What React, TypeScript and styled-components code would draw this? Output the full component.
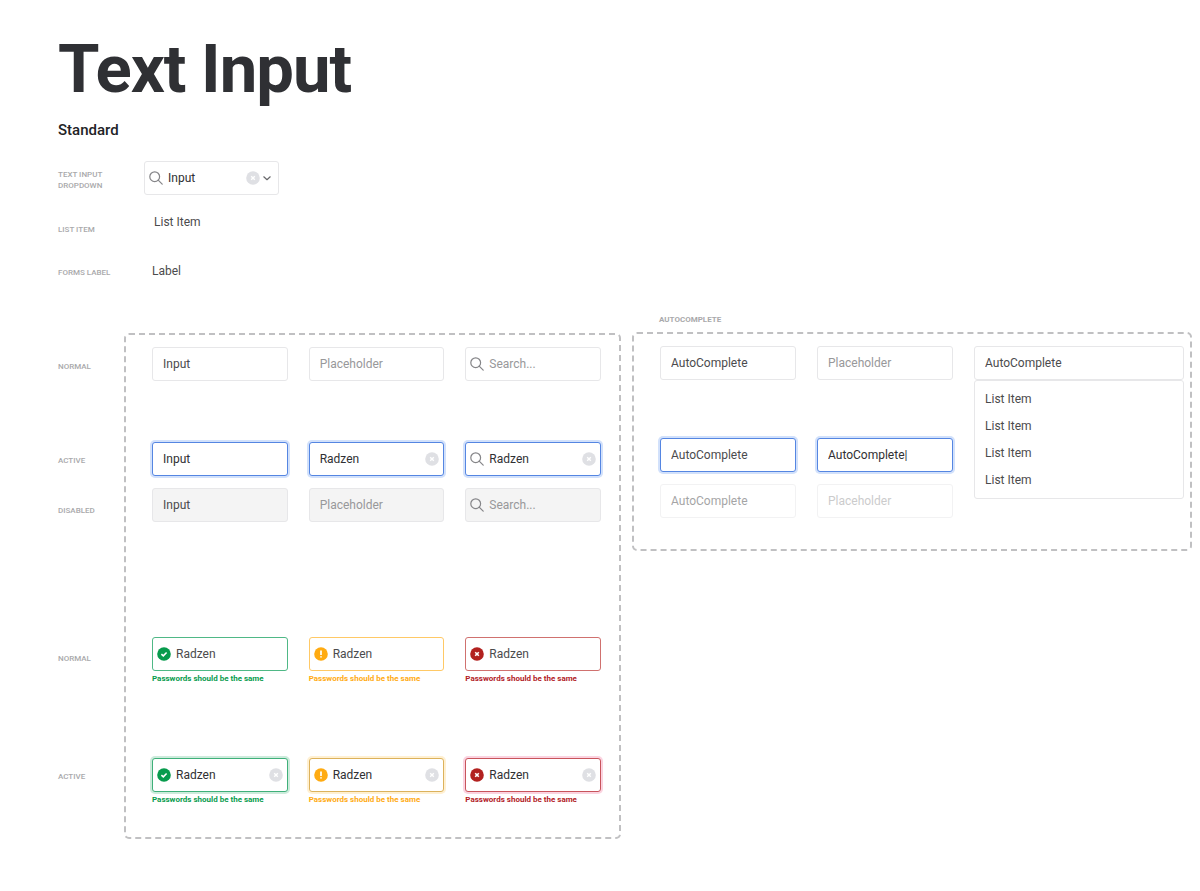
import React from "react";
import styled, { createGlobalStyle, css } from "styled-components";

const GlobalStyle = createGlobalStyle`
  *, *::before, *::after { box-sizing: border-box; }
  body {
    margin: 0;
    background: #fff;
    color: #4b4b4d;
    font-family: Roboto, "Liberation Sans", sans-serif;
    font-size: 12px;
  }
`;

type Tone = "success" | "warning" | "danger";

const tones: Record<Tone, { solid: string; line: string; activeLine: string; ring: string }> = {
  success: { solid: "#079b4d", line: "#4fb886", activeLine: "#3fb07a", ring: "#cdebdc" },
  warning: { solid: "#ffab12", line: "#ffc966", activeLine: "#dcb25c", ring: "#fff0d2" },
  danger: { solid: "#b2211f", line: "#d0716f", activeLine: "#c8545c", ring: "#fbd3e0" },
};

const Page = styled.main`
  padding: 29px 8px 32px 58px;
`;

const Title = styled.h1`
  margin: 0;
  color: #2f3034;
  font-size: 67px;
  font-weight: 700;
  line-height: 80px;
  letter-spacing: -1px;
`;

const Subtitle = styled.h2`
  margin: 11px 0 21px;
  color: #222326;
  font-size: 15px;
  font-weight: 500;
  line-height: 20px;
`;

const tagText = css`
  color: #a9a9ab;
  font-size: 8px;
  font-weight: 500;
  line-height: 11px;
  text-transform: uppercase;
`;

const Tag = styled.span`
  ${tagText}
`;

const TagLabel = styled.label`
  ${tagText}
`;

const SpecRow = styled.div<{ $align?: string; $space?: number }>`
  display: grid;
  grid-template-columns: 86px 135px;
  align-items: ${(p) => p.$align ?? "center"};
  margin-bottom: ${(p) => p.$space ?? 0}px;

  & > :first-child {
    width: 60px;
    padding-top: 3px;
  }
`;

const SampleItem = styled.span`
  padding: 1px 0 0 10px;
  line-height: 26px;
`;

const SampleLabel = styled.label`
  padding: 1px 0 0 8px;
  line-height: 26px;
`;

const Board = styled.div`
  display: grid;
  grid-template-columns: 66px minmax(0, 497fr) minmax(0, 571fr);
  align-items: start;
`;

const StateTags = styled.div`
  display: grid;
  grid-template-rows: 94px 50px 148px 118px auto;
  padding-top: 47px;
`;

const Panel = styled.section`
  padding: 12px 18px 32px 26px;
  border: 2px dashed #c0c0c2;
  border-radius: 5px;
`;

const InputPanel = styled(Panel)`
  margin: 19px 0 0;
`;

const AutoColumn = styled.div`
  margin-left: 11px;

  & > ${Tag} {
    display: block;
    padding-left: 27px;
    margin-bottom: 7px;
    font-weight: 700;
  }
`;

const AutoPanel = styled(Panel)`
  display: grid;
  grid-template-columns: 293fr 210fr;
  column-gap: 21px;
  padding-right: 6px;
  padding-bottom: 31px;
`;

const Row = styled.div<{ $cols?: number; $space?: number }>`
  display: grid;
  grid-template-columns: repeat(${(p) => p.$cols ?? 3}, minmax(0, 1fr));
  column-gap: 21px;
  margin-bottom: ${(p) => p.$space ?? 0}px;
`;

interface BoxProps {
  $active?: boolean;
  $disabled?: boolean;
  $faded?: boolean;
  $icon?: boolean;
  $tone?: Tone;
}

const Box = styled.div<BoxProps>`
  display: flex;
  align-items: center;
  height: 34px;
  padding: 0 4px 0 ${(p) => (p.$icon ? 4 : 10)}px;
  border: 1px solid
    ${(p) =>
      p.$tone
        ? p.$active
          ? tones[p.$tone].activeLine
          : tones[p.$tone].line
        : p.$active
          ? "#5586e2"
          : "#e7e7e9"};
  border-radius: 3px;
  background: ${(p) => (p.$disabled ? "#f4f4f4" : "#fff")};
  box-shadow: ${(p) => (p.$active ? `0 0 0 2px ${p.$tone ? tones[p.$tone].ring : "#d2e1fb"}` : "none")};
  opacity: ${(p) => (p.$faded ? 0.5 : 1)};
`;

const TextBox = styled.input<{ $strong?: boolean }>`
  flex: 1;
  min-width: 0;
  width: 100%;
  height: 30px;
  padding: 0;
  border: 0;
  outline: 0;
  background: transparent;
  color: ${(p) => (p.$strong ? "#303033" : "#4b4b4d")};
  font: inherit;

  &::placeholder {
    color: #98989a;
    opacity: 1;
  }
`;

const IconSlot = styled.span`
  display: flex;
  flex: none;
  width: 14px;
  margin-right: 5px;
`;

const IconButton = styled.button`
  display: flex;
  flex: none;
  padding: 0;
  border: 0;
  background: none;
`;

const Message = styled.p<{ $tone: Tone }>`
  margin: 2px 0 0;
  color: ${(p) => tones[p.$tone].solid};
  font-size: 8px;
  font-weight: 700;
  line-height: 11px;
  white-space: nowrap;
`;

const Options = styled.ul`
  margin: 0;
  padding: 5px 10px 4px;
  border: 1px solid #e7e7e9;
  border-radius: 3px;
  list-style: none;
  line-height: 27px;
`;

const SearchIcon = () => (
  <svg width="14" height="14" viewBox="0 0 14 14" fill="none" stroke="#858588" strokeWidth="1.2" strokeLinecap="round">
    <circle cx="5.7" cy="5.7" r="4.9" />
    <path d="M9.2 9.2 13.2 13.2" />
  </svg>
);

const ClearIcon = () => (
  <svg width="14" height="14" viewBox="0 0 14 14" fill="none">
    <circle cx="7" cy="7" r="6.8" fill="#dfe0e4" />
    <path d="M5.2 5.2 8.8 8.8M8.8 5.2 5.2 8.8" stroke="#fff" strokeWidth="1.4" />
  </svg>
);

const ChevronIcon = () => (
  <svg width="14" height="14" viewBox="0 0 14 14" fill="none" stroke="#68686b" strokeWidth="1.2" strokeLinecap="round" strokeLinejoin="round">
    <path d="M3.8 5.8 7 8.7 10.2 5.8" />
  </svg>
);

const ToneIcon = ({ tone }: { tone: Tone }) => (
  <svg width="14" height="14" viewBox="0 0 14 14" fill="none" stroke="#fff">
    <circle cx="7" cy="7" r="6.8" fill={tones[tone].solid} stroke="none" />
    {tone === "success" && <path d="M4.4 7.1 6.3 8.8 9.6 5.5" strokeWidth="1.6" />}
    {tone === "warning" && <path d="M7 3.6V8M7 9.2V10.6" strokeWidth="1.7" />}
    {tone === "danger" && <path d="M5.2 5.2 8.8 8.8M8.8 5.2 5.2 8.8" strokeWidth="1.6" />}
  </svg>
);

interface FieldProps {
  name: string;
  id?: string;
  value?: string;
  placeholder?: string;
  search?: boolean;
  clearable?: boolean;
  dropdown?: boolean;
  active?: boolean;
  strong?: boolean;
  disabled?: boolean;
  faded?: boolean;
  tone?: Tone;
}

const Field = ({ name, id, value, placeholder, search, clearable, dropdown, active, strong, disabled, faded, tone }: FieldProps) => (
  <Box $active={active} $disabled={disabled && !faded} $faded={faded} $icon={search || !!tone} $tone={tone}>
    {search && <IconSlot><SearchIcon /></IconSlot>}
    {tone && <IconSlot><ToneIcon tone={tone} /></IconSlot>}
    <TextBox
      id={id}
      type="text"
      aria-label={id ? undefined : name}
      defaultValue={value}
      placeholder={placeholder}
      disabled={disabled}
      $strong={strong}
    />
    {clearable && <IconButton type="button" aria-label={`Clear ${name}`}><ClearIcon /></IconButton>}
    {dropdown && <IconButton type="button" aria-label="Open list"><ChevronIcon /></IconButton>}
  </Box>
);

const toneOrder: Tone[] = ["success", "warning", "danger"];

const ValidationRow = ({ active, space }: { active?: boolean; space?: number }) => (
  <Row $space={space}>
    {toneOrder.map((tone) => (
      <div key={tone}>
        <Field name={`Password ${tone}`} value="Radzen" tone={tone} active={active} strong={active} clearable={active} />
        <Message $tone={tone}>Passwords should be the same</Message>
      </div>
    ))}
  </Row>
);

export default function App() {
  return (
    <>
      <GlobalStyle />
      <Page>
        <Title>Text Input</Title>
        <Subtitle>Standard</Subtitle>

        <SpecRow $space={13}>
          <TagLabel htmlFor="dropdown">Text input dropdown</TagLabel>
          <Field name="dropdown" id="dropdown" value="Input" search clearable dropdown strong />
        </SpecRow>
        <SpecRow $align="end" $space={22}>
          <Tag>List item</Tag>
          <SampleItem>List Item</SampleItem>
        </SpecRow>
        <SpecRow $space={30}>
          <Tag>Forms label</Tag>
          <SampleLabel htmlFor="standard">Label</SampleLabel>
        </SpecRow>

        <Board>
          <StateTags>
            <Tag>Normal</Tag>
            <Tag>Active</Tag>
            <Tag>Disabled</Tag>
            <Tag>Normal</Tag>
            <Tag>Active</Tag>
          </StateTags>

          <InputPanel>
            <Row $space={61}>
              <Field name="standard" id="standard" value="Input" />
              <Field name="Placeholder" placeholder="Placeholder" />
              <Field name="Search" placeholder="Search..." search />
            </Row>
            <Row $space={12}>
              <Field name="Active input" value="Input" active strong />
              <Field name="Active clearable input" value="Radzen" active strong clearable />
              <Field name="Active search" value="Radzen" active strong search clearable />
            </Row>
            <Row $space={115}>
              <Field name="Disabled input" value="Input" disabled />
              <Field name="Disabled placeholder" placeholder="Placeholder" disabled />
              <Field name="Disabled search" placeholder="Search..." disabled search />
            </Row>
            <ValidationRow space={74} />
            <ValidationRow active />
          </InputPanel>

          <AutoColumn>
            <Tag>Autocomplete</Tag>
            <AutoPanel>
              <div>
                <Row $cols={2} $space={58}>
                  <Field name="Autocomplete" value="AutoComplete" />
                  <Field name="Autocomplete placeholder" placeholder="Placeholder" />
                </Row>
                <Row $cols={2} $space={12}>
                  <Field name="Active autocomplete" value="AutoComplete" active />
                  <Field name="Typing autocomplete" value="AutoComplete|" active strong />
                </Row>
                <Row $cols={2}>
                  <Field name="Disabled autocomplete" value="AutoComplete" disabled faded />
                  <Field name="Disabled autocomplete placeholder" placeholder="Placeholder" disabled faded />
                </Row>
              </div>
              <div>
                <Field name="Open autocomplete" value="AutoComplete" />
                <Options>
                  <li>List Item</li>
                  <li>List Item</li>
                  <li>List Item</li>
                  <li>List Item</li>
                </Options>
              </div>
            </AutoPanel>
          </AutoColumn>
        </Board>
      </Page>
    </>
  );
}
